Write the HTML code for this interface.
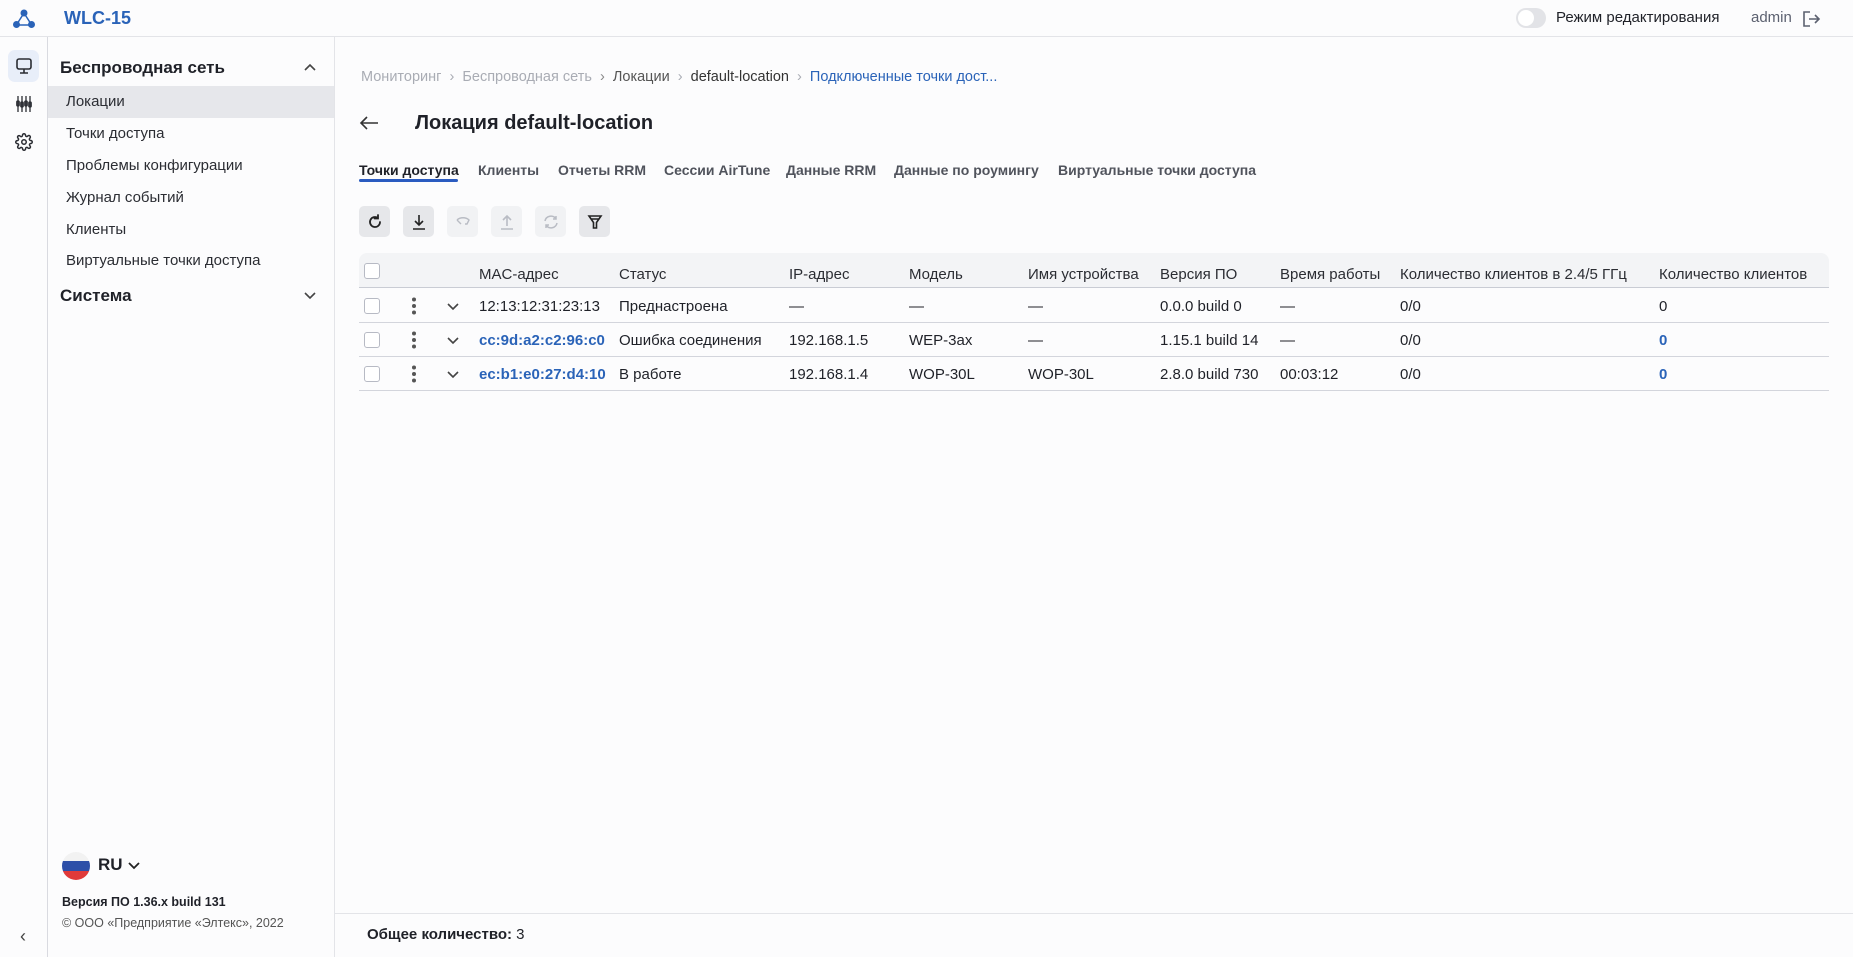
<!DOCTYPE html>
<html><head><meta charset="utf-8"><style>
*{box-sizing:border-box;margin:0;padding:0}
body{width:1853px;height:957px;overflow:hidden;background:#fcfcfd;font-family:"Liberation Sans","Noto Sans CJK SC",sans-serif;color:#1f2128;font-size:15px;position:relative}
.abs{position:absolute}
.top{left:0;top:0;width:1853px;height:37px;border-bottom:1px solid #e3e4e8;background:#fcfcfd}
.rail{left:0;top:37px;width:48px;height:920px;border-right:1px solid #d9dae0}
.side{left:48px;top:37px;width:287px;height:920px;border-right:1px solid #e3e4e8}
.item{position:absolute;left:0;width:286px;height:32px;line-height:32px;padding-left:18px;font-size:15px;color:#2b2d33}
.th{position:absolute;top:266px;font-size:15px;color:#2b2d33}
.row{position:absolute;left:359px;width:1470px;height:34px;border-bottom:1px solid #d3d5dc}
.c{position:absolute;font-size:15px;line-height:36px}
.cb{position:absolute;width:16px;height:16px;border:1.5px solid #b7bac4;border-radius:3px;background:#fff}
.blue{color:#2a63b8;font-weight:bold}
.btn{position:absolute;top:206px;width:31px;height:31px;border-radius:5px;background:#e6e7ea;display:flex;align-items:center;justify-content:center}
.btn.dis{background:#f1f2f4}
.tab{position:absolute;top:162px;font-size:14px;color:#50535c;font-weight:bold}
</style></head><body>
<div class="abs top"></div>
<svg class="abs" style="left:12px;top:9px" width="24" height="20" viewBox="0 0 24 20"><g stroke="#2a63b8" stroke-width="1.5"><line x1="12" y1="4" x2="5" y2="15"/><line x1="12" y1="4" x2="19" y2="15"/><line x1="5" y1="16" x2="19" y2="16"/></g><circle cx="12" cy="4" r="3.5" fill="#2a63b8"/><circle cx="4.5" cy="15.5" r="3.5" fill="#2a63b8"/><circle cx="19.5" cy="15.5" r="3.5" fill="#2a63b8"/></svg>
<div class="abs" style="left:64px;top:8px;font-size:18px;font-weight:bold;color:#2a63b8">WLC-15</div>
<div class="abs" style="left:1516px;top:8px;width:30px;height:20px;border-radius:10px;background:#e2e3e7"><div style="margin:2px;width:16px;height:16px;border-radius:8px;background:#fff"></div></div>
<div class="abs" style="left:1556px;top:9px;font-size:15px">Режим редактирования</div>
<div class="abs" style="left:1751px;top:9px;font-size:15px;color:#5c6170">admin</div>
<svg class="abs" style="left:1801px;top:9px" width="20" height="20" viewBox="0 0 20 20" fill="none" stroke="#5c6170" stroke-width="1.6"><path d="M9 3H3v14h6M8 10h10M14 6l4 4-4 4"/></svg>

<div class="abs rail"></div>
<div class="abs" style="left:8px;top:50px;width:31px;height:32px;border-radius:7px;background:#e8eef9"></div>
<svg class="abs" style="left:15px;top:57px" width="18" height="18" viewBox="0 0 18 18" fill="none" stroke="#2b2d33" stroke-width="1.6"><rect x="2" y="2" width="14" height="10" rx="2"/><path d="M9 12v4M5 16h8"/></svg>
<svg class="abs" style="left:15px;top:95px" width="18" height="18" viewBox="0 0 18 18" fill="none" stroke="#2b2d33" stroke-width="1.3"><path d="M3 1v16M7 1v16M11 1v16M15 1v16"/><rect x="1.8" y="6" width="2.4" height="5" rx="1"/><rect x="5.8" y="7" width="2.4" height="5" rx="1"/><rect x="9.8" y="6" width="2.4" height="5" rx="1"/><rect x="13.8" y="7" width="2.4" height="5" rx="1"/></svg>
<svg class="abs" style="left:15px;top:133px" width="18" height="18" viewBox="0 0 24 24" fill="none" stroke="#2b2d33" stroke-width="2"><circle cx="12" cy="12" r="3"/><path d="M19.4 15a1.7 1.7 0 0 0 .3 1.8l.1.1a2 2 0 1 1-2.8 2.8l-.1-.1a1.7 1.7 0 0 0-1.8-.3 1.7 1.7 0 0 0-1 1.5V21a2 2 0 1 1-4 0v-.1a1.7 1.7 0 0 0-1.1-1.5 1.7 1.7 0 0 0-1.8.3l-.1.1a2 2 0 1 1-2.8-2.8l.1-.1a1.7 1.7 0 0 0 .3-1.8 1.7 1.7 0 0 0-1.5-1H3a2 2 0 1 1 0-4h.1a1.7 1.7 0 0 0 1.5-1.1 1.7 1.7 0 0 0-.3-1.8l-.1-.1a2 2 0 1 1 2.8-2.8l.1.1a1.7 1.7 0 0 0 1.8.3H9a1.7 1.7 0 0 0 1-1.5V3a2 2 0 1 1 4 0v.1a1.7 1.7 0 0 0 1 1.5 1.7 1.7 0 0 0 1.8-.3l.1-.1a2 2 0 1 1 2.8 2.8l-.1.1a1.7 1.7 0 0 0-.3 1.8V9a1.7 1.7 0 0 0 1.5 1H21a2 2 0 1 1 0 4h-.1a1.7 1.7 0 0 0-1.5 1z"/></svg>
<div class="abs" style="left:20px;top:926px;font-size:18px;color:#444">‹</div>

<div class="abs side">
<div class="abs" style="left:12px;top:21px;font-size:17px;font-weight:bold">Беспроводная сеть</div>
<svg class="abs" style="left:256px;top:26px" width="12" height="8" viewBox="0 0 12 8" fill="none" stroke="#444" stroke-width="1.6"><path d="M1 7l5-5 5 5"/></svg>
<div class="item" style="top:49px;background:#e6e7eb">Локации</div>
<div class="item" style="top:81px">Точки доступа</div>
<div class="item" style="top:113px">Проблемы конфигурации</div>
<div class="item" style="top:145px">Журнал событий</div>
<div class="item" style="top:177px">Клиенты</div>
<div class="item" style="top:208px">Виртуальные точки доступа</div>
<div class="abs" style="left:12px;top:249px;font-size:17px;font-weight:bold">Система</div>
<svg class="abs" style="left:256px;top:255px" width="12" height="8" viewBox="0 0 12 8" fill="none" stroke="#444" stroke-width="1.6"><path d="M1 1l5 5 5-5"/></svg>
<div class="abs" style="left:14px;top:815px;width:28px;height:28px;border-radius:14px;overflow:hidden"><div style="height:9px;background:#f2f2f2"></div><div style="height:10px;background:#2d4fa8"></div><div style="height:9px;background:#e03a3a"></div></div>
<div class="abs" style="left:50px;top:818px;font-size:17px;font-weight:bold">RU</div>
<svg class="abs" style="left:80px;top:825px" width="12" height="8" viewBox="0 0 12 8" fill="none" stroke="#222" stroke-width="1.8"><path d="M1 1l5 5 5-5"/></svg>
<div class="abs" style="left:14px;top:858px;font-size:12.5px;font-weight:bold">Версия ПО 1.36.x build 131</div>
<div class="abs" style="left:14px;top:879px;font-size:12.5px;color:#555">© ООО «Предприятие «Элтекс», 2022</div>
</div>

<div class="abs" style="left:361px;top:69px;font-size:14.5px;color:#a9acb4">Мониторинг &nbsp;›&nbsp; Беспроводная сеть &nbsp;<span style="color:#888">›</span>&nbsp; <span style="color:#555">Локации</span> &nbsp;›&nbsp; <span style="color:#333">default-location</span> &nbsp;›&nbsp; <span style="color:#2a63b8">Подключенные точки дост...</span></div>
<svg class="abs" style="left:359px;top:115px" width="20" height="16" viewBox="0 0 20 16" fill="none" stroke="#333" stroke-width="1.6"><path d="M19 8H2M8 2L2 8l6 6"/></svg>
<div class="abs" style="left:415px;top:112px;font-size:20px;font-weight:bold">Локация default-location</div>

<div class="tab" style="left:359px;color:#1f2128">Точки доступа</div>
<div class="abs" style="left:359px;top:179px;width:99px;height:3px;border-radius:2px;background:#2a5bc0"></div>
<div class="tab" style="left:478px">Клиенты</div>
<div class="tab" style="left:558px">Отчеты RRM</div>
<div class="tab" style="left:664px">Сессии AirTune</div>
<div class="tab" style="left:786px">Данные RRM</div>
<div class="tab" style="left:894px">Данные по роумингу</div>
<div class="tab" style="left:1058px">Виртуальные точки доступа</div>

<div class="btn" style="left:359px"><svg width="16" height="16" viewBox="0 0 16 16" fill="none" stroke="#222" stroke-width="1.8"><path d="M13 8a5 5 0 1 1-2-4M11 1v3.5h-3.5" stroke-linecap="round"/></svg></div>
<div class="btn" style="left:403px"><svg width="16" height="16" viewBox="0 0 16 16" fill="none" stroke="#222" stroke-width="1.6"><path d="M8 1v10M4 7l4 4 4-4M2 15h12"/></svg></div>
<div class="btn dis" style="left:447px"><svg width="16" height="16" viewBox="0 0 16 16" fill="none" stroke="#b9bcc4" stroke-width="1.4"><path d="M2 6c3-3 9-3 12 0l-2 4h-2M2 6l4 4"/></svg></div>
<div class="btn dis" style="left:491px"><svg width="16" height="16" viewBox="0 0 16 16" fill="none" stroke="#b9bcc4" stroke-width="1.6"><path d="M8 12V2M4 6l4-4 4 4M2 15h12"/></svg></div>
<div class="btn dis" style="left:535px"><svg width="16" height="16" viewBox="0 0 16 16" fill="none" stroke="#b9bcc4" stroke-width="1.5"><path d="M2 7a6 6 0 0 1 11-2M14 9a6 6 0 0 1-11 2M13 2v3h-3M3 14v-3h3"/></svg></div>
<div class="btn" style="left:579px"><svg width="16" height="16" viewBox="0 0 16 16" fill="none" stroke="#222" stroke-width="1.6"><path d="M2 2h12L9.5 8.5V14h-3V8.5z M3.5 5h9"/></svg></div>

<div class="abs" style="left:359px;top:253px;width:1470px;height:35px;background:#f3f4f6;border-radius:8px 8px 0 0;border-bottom:1px solid #c9ccd4"></div>
<div class="cb" style="left:364px;top:263px"></div>
<div class="th" style="left:479px">MAC-адрес</div>
<div class="th" style="left:619px">Статус</div>
<div class="th" style="left:789px">IP-адрес</div>
<div class="th" style="left:909px">Модель</div>
<div class="th" style="left:1028px">Имя устройства</div>
<div class="th" style="left:1160px">Версия ПО</div>
<div class="th" style="left:1280px">Время работы</div>
<div class="th" style="left:1400px">Количество клиентов в 2.4/5 ГГц</div>
<div class="th" style="left:1659px">Количество клиентов</div>

<div class="row" style="top:289px">
<div class="cb" style="left:5px;top:9px"></div>
<svg class="abs" style="left:52px;top:8px" width="6" height="18"><circle cx="3" cy="2.5" r="2" fill="#555"/><circle cx="3" cy="9" r="2" fill="#555"/><circle cx="3" cy="15.5" r="2" fill="#555"/></svg>
<svg class="abs" style="left:88px;top:14px" width="12" height="8" viewBox="0 0 12 8" fill="none" stroke="#444" stroke-width="1.6"><path d="M1 1l5 5 5-5"/></svg>
<div class="c" style="left:120px">12:13:12:31:23:13</div><div class="c" style="left:260px">Преднастроена</div><div class="c" style="left:430px">—</div><div class="c" style="left:550px">—</div><div class="c" style="left:669px">—</div><div class="c" style="left:801px">0.0.0 build 0</div><div class="c" style="left:921px">—</div><div class="c" style="left:1041px">0/0</div><div class="c" style="left:1300px">0</div>
</div>
<div class="row" style="top:323px">
<div class="cb" style="left:5px;top:9px"></div>
<svg class="abs" style="left:52px;top:8px" width="6" height="18"><circle cx="3" cy="2.5" r="2" fill="#555"/><circle cx="3" cy="9" r="2" fill="#555"/><circle cx="3" cy="15.5" r="2" fill="#555"/></svg>
<svg class="abs" style="left:88px;top:14px" width="12" height="8" viewBox="0 0 12 8" fill="none" stroke="#444" stroke-width="1.6"><path d="M1 1l5 5 5-5"/></svg>
<div class="c blue" style="left:120px">cc:9d:a2:c2:96:c0</div><div class="c" style="left:260px">Ошибка соединения</div><div class="c" style="left:430px">192.168.1.5</div><div class="c" style="left:550px">WEP-3ax</div><div class="c" style="left:669px">—</div><div class="c" style="left:801px">1.15.1 build 14</div><div class="c" style="left:921px">—</div><div class="c" style="left:1041px">0/0</div><div class="c blue" style="left:1300px">0</div>
</div>
<div class="row" style="top:357px">
<div class="cb" style="left:5px;top:9px"></div>
<svg class="abs" style="left:52px;top:8px" width="6" height="18"><circle cx="3" cy="2.5" r="2" fill="#555"/><circle cx="3" cy="9" r="2" fill="#555"/><circle cx="3" cy="15.5" r="2" fill="#555"/></svg>
<svg class="abs" style="left:88px;top:14px" width="12" height="8" viewBox="0 0 12 8" fill="none" stroke="#444" stroke-width="1.6"><path d="M1 1l5 5 5-5"/></svg>
<div class="c blue" style="left:120px">ec:b1:e0:27:d4:10</div><div class="c" style="left:260px">В работе</div><div class="c" style="left:430px">192.168.1.4</div><div class="c" style="left:550px">WOP-30L</div><div class="c" style="left:669px">WOP-30L</div><div class="c" style="left:801px">2.8.0 build 730</div><div class="c" style="left:921px">00:03:12</div><div class="c" style="left:1041px">0/0</div><div class="c blue" style="left:1300px">0</div>
</div>

<div class="abs" style="left:335px;top:913px;width:1518px;height:44px;border-top:1px solid #e3e4e8"></div>
<div class="abs" style="left:367px;top:926px;font-size:15px"><b>Общее количество:</b> 3</div>
</body></html>
